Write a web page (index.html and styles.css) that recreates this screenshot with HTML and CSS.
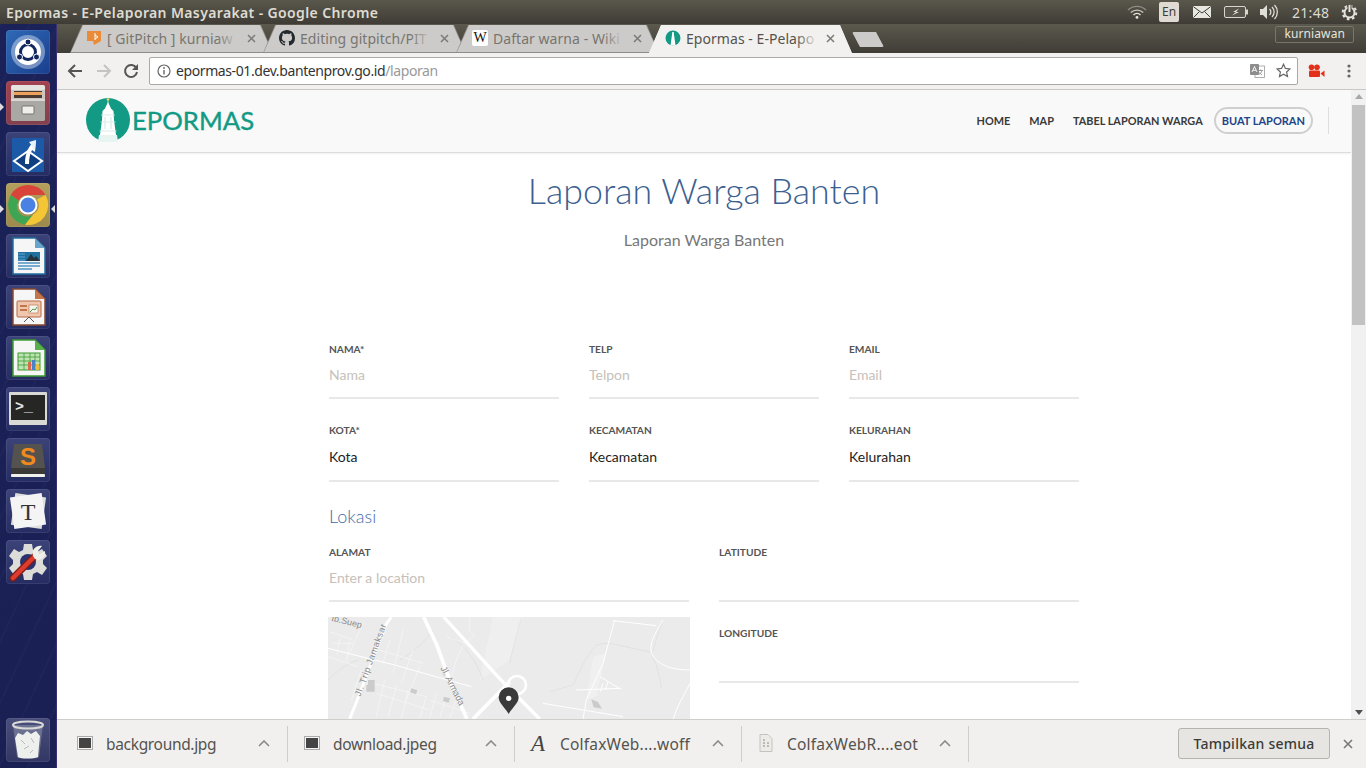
FILE: index.html
```html
<!DOCTYPE html>
<html lang="id">
<head>
<meta charset="utf-8">
<title>Epormas - E-Pelaporan Masyarakat</title>
<link rel="stylesheet" href="styles.css">
</head>
<body>
<div class="desktop">
  <header class="topbar">
    <div class="win-title">Epormas - E-Pelaporan Masyarakat - Google Chrome</div>
    <div class="indicators">
      <svg class="ind-wifi" width="20" height="14" viewBox="0 0 20 14"><path d="M1 5a13 13 0 0 1 18 0" fill="none" stroke="#8f8d86" stroke-width="1.4"/><path d="M3.8 7.6a9 9 0 0 1 12.4 0" fill="none" stroke="#c9c7c0" stroke-width="1.4"/><path d="M6.5 10a5 5 0 0 1 7 0" fill="none" stroke="#e6e4de" stroke-width="1.4"/><circle cx="10" cy="12.4" r="1.4" fill="#e6e4de"/></svg>
      <div class="ind-lang">En</div>
      <svg class="ind-mail" width="18" height="12" viewBox="0 0 18 12"><rect width="18" height="12" rx="1" fill="#e8e6e0"/><path d="M0.5 .8L9 7l8.500-6.200M0.500 11.500L6.500 5.500M17.500 11.500L11.500 5.500" fill="none" stroke="#3f3d36" stroke-width="1"/></svg>
      <svg class="ind-batt" width="24" height="12" viewBox="0 0 24 12"><rect x=".5" y=".5" width="21" height="11" rx="1.500" fill="#57554c" stroke="#d8d6d0"/><rect x="22" y="3.500" width="2" height="5" fill="#d8d6d0"/><path d="M15 2.500L9 6h3l-4 3.500L15 6h-3z" fill="#eceae4"/></svg>
      <svg class="ind-vol" width="20" height="16" viewBox="0 0 20 16"><path d="M1 5h3l4-4v14l-4-4H1z" fill="#e0ded8"/><path d="M10.500 5a4 4 0 0 1 0 6M13 3a7 7 0 0 1 0 10M15.500 1a10 10 0 0 1 0 14" fill="none" stroke="#e0ded8" stroke-width="1.300"/></svg>
      <div class="ind-clock">21:48</div>
      <svg class="ind-power" width="17" height="17" viewBox="0 0 17 17"><circle cx="8.500" cy="8.500" r="6.800" fill="none" stroke="#e6e4de" stroke-width="2" stroke-dasharray="2.700 2.640"/><circle cx="8.500" cy="8.500" r="5" fill="none" stroke="#e6e4de" stroke-width="2"/><path d="M8.500 1v7" stroke="#45433c" stroke-width="4"/><path d="M8.500 1v7" stroke="#e6e4de" stroke-width="2"/></svg>
    </div>
  </header>

  <div class="workspace">
    <nav class="launcher">
      <div class="tile tile-blue">
        <svg viewBox="0 0 44 44"><circle cx="22" cy="22" r="17" fill="#dfe9f6" opacity=".45"/><circle cx="22" cy="22" r="13" fill="#fff"/><circle cx="22" cy="22" r="7.500" fill="none" stroke="#14265f" stroke-width="3"/><circle cx="22" cy="12" r="3" fill="#14265f" stroke="#fff"/><circle cx="13.500" cy="27" r="3" fill="#14265f" stroke="#fff"/><circle cx="30.500" cy="27" r="3" fill="#14265f" stroke="#fff"/></svg>
      </div>
      <div class="tile tile-red">
        <svg viewBox="0 0 44 44"><rect x="5" y="4" width="34" height="36" rx="3" fill="#c9c7c2"/><rect x="5" y="4" width="34" height="5" rx="2" fill="#e6e4df"/><rect x="8" y="10" width="28" height="7" fill="#4a3a30"/><rect x="8" y="11" width="28" height="3" fill="#eda35c"/><rect x="5" y="18" width="34" height="22" rx="2" fill="#a9a8a4"/><rect x="5" y="18" width="34" height="2" fill="#d9d7d2"/><rect x="16" y="25" width="12" height="8" rx="1" fill="#eeeeea" stroke="#77756f"/></svg>
      </div>
      <div class="tile tile-navy">
        <svg viewBox="0 0 44 44"><rect x="6" y="6" width="32" height="34" fill="#1c5aa8"/><path d="M22 19L8 29l14 10 14-10z" fill="#0f3f80" stroke="#fff" stroke-width="2"/><path d="M19 32C19 20 23 13 30 8l-1 12-3-2c-2 4-3 8-3 14z" fill="#fff"/><path d="M30 8l-7 2 6 8z" fill="#e9f1f8"/></svg>
      </div>
      <div class="tile tile-gold">
        <svg viewBox="0 0 44 44"><path d="M4.800 12A20 20 0 0 1 39.500 12H22a10 10 0 0 0-9.200 5.700z" fill="#d9443a"/><path d="M4.800 12A20 20 0 0 0 19 41.800L27.600 31A10 10 0 0 1 12.800 17.700z" fill="#3ea553"/><path d="M39.500 12A20 20 0 0 1 19 41.800L27.600 31A10 10 0 0 0 31 16.500z" fill="#f4c534"/><circle cx="22" cy="22" r="9.500" fill="#fff"/><circle cx="22" cy="22" r="7.500" fill="#4a82e4"/></svg>
      </div>
      <div class="tile tile-navy">
        <svg viewBox="0 0 44 44"><path d="M7 4h22l10 10v26H7z" fill="#f6f6f6" stroke="#1f6f9f" stroke-width="1.500"/><path d="M29 4l10 10H29z" fill="#6aa5c9"/><rect x="12" y="18" width="22" height="9" fill="#1f6f9f"/><path d="M20 27l5-7 3 4 2-2 4 5z" fill="#26323c"/><path d="M12 20h7M12 23h7M12 26h7M12 29h22M12 32h22M12 35h14" stroke="#4d93c4" stroke-width="1.500"/></svg>
      </div>
      <div class="tile tile-navy">
        <svg viewBox="0 0 44 44"><path d="M7 4h22l10 10v26H7z" fill="#f6f6f6" stroke="#8a4a2c" stroke-width="1.500"/><path d="M29 4l10 10H29z" fill="#c4764a"/><rect x="11" y="16" width="24" height="16" rx="1" fill="#efc6ae" stroke="#b66a42"/><rect x="14" y="20" width="7" height="2" fill="#c4764a"/><rect x="14" y="24" width="7" height="2" fill="#c4764a"/><rect x="23" y="20" width="9" height="8" fill="#f5f5f0" stroke="#b66a42" stroke-width=".6"/><path d="M24 27l3-3 2 1 2-3" fill="none" stroke="#4a9a4c"/><path d="M23 32l-5 5M23 32l5 5" stroke="#555"/></svg>
      </div>
      <div class="tile tile-navy">
        <svg viewBox="0 0 44 44"><path d="M7 4h22l10 10v26H7z" fill="#f6f6f6" stroke="#3c9c30" stroke-width="1.500"/><path d="M29 4l10 10H29z" fill="#58b04a"/><rect x="12" y="17" width="22" height="17" fill="#bfe3b4" stroke="#3c9c30"/><path d="M12 21h22M12 25h22M12 29h22M18 17v17M24 17v17M29 17v17" stroke="#3c9c30" stroke-width=".8"/><rect x="22" y="26" width="3" height="8" fill="#d86a4a"/><rect x="26" y="24" width="3" height="10" fill="#4a82c8"/><rect x="30" y="28" width="3" height="6" fill="#e8c040"/></svg>
      </div>
      <div class="tile tile-navy">
        <svg viewBox="0 0 44 44"><rect x="3" y="5" width="38" height="33" rx="1" fill="#d9d9d6"/><rect x="5" y="8" width="34" height="25" fill="#262624"/><text class="term-text" x="9" y="24">&gt;_</text></svg>
      </div>
      <div class="tile tile-navy">
        <svg viewBox="0 0 44 44"><path d="M8 6h28l3 24H5z" fill="#54524f"/><rect x="5" y="30" width="34" height="8" fill="#3a3937"/><rect x="5" y="36" width="34" height="3" rx="1" fill="#f1f0ec"/><text class="sublime-text" x="22" y="27">S</text></svg>
      </div>
      <div class="tile tile-navy">
        <svg viewBox="0 0 44 44"><rect x="7" y="6" width="31" height="32" fill="#dedede" transform="rotate(8 22 22)"/><rect x="6" y="6" width="32" height="32" fill="#f4f4f4" transform="rotate(-8 22 22)"/><text class="typora-text" x="22" y="31">T</text></svg>
      </div>
      <div class="tile tile-navy">
        <svg viewBox="0 0 44 44"><path d="M18 4h8l1 6 4 2 5-3 5 7-4 4v4l4 4-5 7-5-3-4 2-1 6h-8l-1-6-4-2-5 3-5-7 4-4v-4l-4-4 5-7 5 3 4-2z" fill="#dcdcd8"/><circle cx="22" cy="22" r="8" fill="#2a3270"/><path d="M7 38L30 15" stroke="#7e1c16" stroke-width="7" stroke-linecap="round"/><path d="M7 38L30 15" stroke="#dd3c2e" stroke-width="4.500" stroke-linecap="round"/><path d="M27 16c-2-6 3-11 9-10l-4 5 2 3 5-3c1 6-5 11-10 8z" fill="#efefea"/></svg>
      </div>
      <div class="tile tile-navy tile-trash">
        <svg viewBox="0 0 44 44"><path d="M7 7l4 32c0 2 22 2 22 0l4-32z" fill="#8f93a8" opacity=".55"/><path d="M9 20l3-5 5 2 4-4 4 3 5-3 4 5-1 10-1 11c-5 2-17 2-20 0z" fill="#eef0ee"/><path d="M15 22l4 4M25 20l3 5M18 31l5-3M27 32l-3 3" stroke="#b8bab8"/><ellipse cx="22" cy="7" rx="15" ry="3.500" fill="none" stroke="#d8d8d6" stroke-width="2"/></svg>
      </div>
      <span class="pip pip-files"></span>
      <span class="pip pip-chrome-l"></span>
      <span class="pip pip-chrome-r"></span>
    </nav>

    <main class="chrome">
      <div class="tabstrip">
        <div class="tabs">
          <div class="tab">
            <svg class="fav" viewBox="0 0 16 16"><path d="M1 1h14v10l-7 4-1-4H1z" fill="#e98b39"/><path d="M9 3v7M9 5l3 2-3 2" fill="none" stroke="#fff" stroke-width="1"/></svg>
            <span class="tab-title">[ GitPitch ] kurniaw</span>
            <svg class="tab-x" viewBox="0 0 9 9"><path d="M1 1l7 7M8 1L1 8"/></svg>
          </div>
          <div class="tab">
            <svg class="fav" viewBox="0 0 16 16"><path fill="#24292e" d="M8 0C3.580 0 0 3.580 0 8c0 3.540 2.290 6.530 5.470 7.590.4.070.55-.17.55-.38 0-.19-.01-.82-.01-1.490-2.010.37-2.530-.49-2.690-.94-.09-.23-.48-.94-.82-1.130-.28-.15-.68-.52-.01-.53.63-.01 1.080.58 1.230.82.720 1.210 1.870.87 2.330.66.070-.52.28-.87.51-1.070-1.780-.2-3.640-.89-3.640-3.950 0-.87.31-1.590.82-2.150-.08-.2-.36-1.020.08-2.120 0 0 .67-.21 2.200.82.640-.18 1.320-.27 2-.27.680 0 1.360.09 2 .27 1.530-1.040 2.200-.82 2.200-.82.440 1.100.16 1.920.08 2.120.51.56.82 1.270.82 2.150 0 3.070-1.870 3.750-3.650 3.950.29.25.54.73.54 1.480 0 1.070-.01 1.930-.01 2.200 0 .21.15.46.55.38A8.013 8.013 0 0016 8c0-4.420-3.580-8-8-8z"/></svg>
            <span class="tab-title">Editing gitpitch/PIT</span>
            <svg class="tab-x" viewBox="0 0 9 9"><path d="M1 1l7 7M8 1L1 8"/></svg>
          </div>
          <div class="tab">
            <span class="fav fav-wiki">W</span>
            <span class="tab-title">Daftar warna - Wiki</span>
            <svg class="tab-x" viewBox="0 0 9 9"><path d="M1 1l7 7M8 1L1 8"/></svg>
          </div>
          <div class="tab tab-active">
            <svg class="fav" viewBox="0 0 16 16"><circle cx="8" cy="8" r="7.500" fill="#129a85"/><path d="M7.300 2h1.400l.5 4 1.300 9.500H5.500L6.800 6z" fill="#fff"/></svg>
            <span class="tab-title">Epormas - E-Pelapo</span>
            <svg class="tab-x" viewBox="0 0 9 9"><path d="M1 1l7 7M8 1L1 8"/></svg>
          </div>
          <div class="newtab"></div>
        </div>
        <div class="profile">kurniawan</div>
      </div>

      <div class="toolbar">
        <svg class="tb-btn" width="16" height="14" viewBox="0 0 16 14"><path d="M15 7H2M8 1L2 7l6 6" fill="none" stroke="#555" stroke-width="2"/></svg>
        <svg class="tb-btn tb-fwd" width="16" height="14" viewBox="0 0 16 14"><path d="M1 7h13M8 1l6 6-6 6" fill="none" stroke="#c4c4c4" stroke-width="2"/></svg>
        <svg class="tb-btn tb-reload" width="16" height="16" viewBox="0 0 16 16"><path d="M13.300 5A6 6 0 1 0 14 9" fill="none" stroke="#555" stroke-width="2"/><path d="M15 1v6H9z" fill="#555"/></svg>
        <div class="omnibox">
          <svg class="omni-info" width="14" height="14" viewBox="0 0 14 14"><circle cx="7" cy="7" r="6" fill="none" stroke="#666" stroke-width="1.200"/><path d="M7 6v4.500" stroke="#666" stroke-width="1.400"/><circle cx="7" cy="4" r=".9" fill="#666"/></svg>
          <span class="url">epormas-01.dev.bantenprov.go.id<span class="url-path">/laporan</span></span>
          <svg class="omni-translate" width="15" height="14" viewBox="0 0 15 14"><rect x="5" y="2" width="9.500" height="11.500" fill="#fff" stroke="#999" stroke-width=".8"/><rect width="9" height="11" rx="1" fill="#8d8d8d"/><path d="M2 8l2.500-5.500L7 8M3 6.300h3" fill="none" stroke="#fff" stroke-width=".9"/><path d="M8.500 6.500h4.500M10.500 5.500v1M12 6.500c-.5 2-2 3.500-3 4M9.500 8.500c.5 1 1.500 2 2.500 2.500" fill="none" stroke="#888" stroke-width=".8"/></svg>
          <svg class="omni-star" width="15" height="15" viewBox="0 0 15 15"><path d="M7.500 1.200l1.900 4.200 4.600.5-3.400 3.100.9 4.500-4-2.300-4 2.300.9-4.500L1 5.900l4.600-.5z" fill="none" stroke="#666" stroke-width="1.200"/></svg>
        </div>
        <svg class="tb-ext" width="17" height="14" viewBox="0 0 17 14"><circle cx="3.500" cy="3.200" r="2.800" fill="#e2301a"/><circle cx="9" cy="3.200" r="2.800" fill="#e2301a"/><rect x="1" y="6.500" width="11" height="6.500" rx="1" fill="#e2301a"/><path d="M12.500 9.500L16.500 6.500v6.500z" fill="#e2301a"/></svg>
        <svg class="tb-menu" width="4" height="14" viewBox="0 0 4 14"><circle cx="2" cy="2" r="1.600" fill="#666"/><circle cx="2" cy="7" r="1.600" fill="#666"/><circle cx="2" cy="12" r="1.600" fill="#666"/></svg>
      </div>

      <div class="viewport">
        <div class="page">
          <div class="navbar">
            <div class="brand">
              <svg class="brand-mark" width="44" height="45" viewBox="0 0 44 45"><circle cx="22" cy="22" r="22" fill="#129a85"/><path d="M20 44h-7l3-22 .5-9 2.500-2.500L21.500 5 22 1l.5 4 2.500 5.500 2.500 2.500.5 9 3 22z" fill="#fff"/><path d="M15 17h14M14.500 24h15M13.500 33h17" stroke="#cfe8e2" stroke-width=".8"/><path d="M19 19v12M25 19v12" stroke="#d7ece7" stroke-width="1.200"/><path d="M12 44l1-7h18l1 7z" fill="#e7f4f1"/><circle cx="22" cy="1.500" r="1.300" fill="#e8dc60"/></svg>
              <span class="brand-text">EPORMAS</span>
            </div>
            <div class="menu">
              <a class="menu-link">HOME</a>
              <a class="menu-link">MAP</a>
              <a class="menu-link">TABEL LAPORAN WARGA</a>
              <a class="menu-pill">BUAT LAPORAN</a>
              <span class="menu-rule"></span>
            </div>
          </div>

          <h1 class="page-title">Laporan Warga Banten</h1>
          <p class="page-sub">Laporan Warga Banten</p>

          <form class="report">
            <div class="grid-3">
              <div class="field"><div class="lbl">NAMA*</div><div class="ctl ph">Nama</div></div>
              <div class="field"><div class="lbl">TELP</div><div class="ctl ph">Telpon</div></div>
              <div class="field"><div class="lbl">EMAIL</div><div class="ctl ph">Email</div></div>
            </div>
            <div class="grid-3 grid-sel">
              <div class="field"><div class="lbl">KOTA*</div><div class="ctl sel">Kota</div></div>
              <div class="field"><div class="lbl">KECAMATAN</div><div class="ctl sel">Kecamatan</div></div>
              <div class="field"><div class="lbl">KELURAHAN</div><div class="ctl sel">Kelurahan</div></div>
            </div>
            <h2 class="section">Lokasi</h2>
            <div class="grid-2">
              <div class="col">
                <div class="field"><div class="lbl">ALAMAT</div><div class="ctl ph">Enter a location</div></div>
                <div class="map">
                  <svg width="362" height="102" viewBox="25 51 1086 306">
                    <rect x="25" y="51" width="1086" height="306" fill="#ebebeb"/>
                    <path d="M520 51h90l-40 130-90 60z" fill="#efefef"/>
                    <path d="M820 170l40-10-30 130-30 10z" fill="#f0f0f0"/>
                    <g fill="none" stroke="#dcdcdc" stroke-width="2">
                      <path d="M605 55c-15 50-25 90-35 135M690 275l70-20c20-40 40-90 70-120 40-15 90 10 160 20 20 30 30 70 35 110"/>
                      <path d="M1000 155c10-40 20-70 30-95M25 240c30-30 60-50 90-60M240 180c40-20 80-60 100-90M395 110c40 30 70 60 95 130"/>
                    </g>
                    <g fill="none" stroke="#f8f8f8" stroke-width="2">
                      <path d="M30 95l70 25M60 115l-8 50M90 125l-10 60M40 130h60M130 70l-40 90M25 170l90 30M95 300l30-90"/>
                      <path d="M180 150l130 40M210 120l-20 70M250 90l-30 130M280 150l-35 100M300 200l-40 100M160 250l160 40M170 280l160 50M195 240l-25 110M230 260l-25 90M265 270l-20 85M320 290l-20 65M350 280l-20 75M380 290l-20 65M410 300l-20 55M330 300l120 40"/>
                      <path d="M450 51v40l12 15-30 30c-20 30-30 70-40 110M380 110l60 20"/>
                    </g>
                    <path d="M25 145l200 50 230 65" fill="none" stroke="#fff" stroke-width="3"/>
                    <path d="M90 357l30-75 45-120 35-90 15-21" fill="none" stroke="#fff" stroke-width="9"/>
                    <path d="M312 51l40 85 40 110 50 111" fill="none" stroke="#fff" stroke-width="11"/>
                    <path d="M372 51l168 185 120 121" fill="none" stroke="#fff" stroke-width="10"/>
                    <path d="M460 357l110-112" fill="none" stroke="#fff" stroke-width="11"/>
                    <circle cx="592" cy="255" r="27" fill="none" stroke="#fff" stroke-width="8"/>
                    <g fill="none" stroke="#fff" stroke-width="3">
                      <path d="M885 60l-35 130-50 110-10 57M880 62l130 15M1030 60c-30 50-40 70-35 100 20 40 70 50 115 50M1111 250c-20 40-40 70-50 107"/>
                      <path d="M670 310l240 40M770 270l135 -5M840 230l60 35M850 250l-8 25M865 245l-8 25"/>
                    </g>
                    <g fill="#cbcbcb"><path d="M145 240h20v35h-25v-20h5z"/><path d="M275 265l18 6-4 12-18-6z"/><path d="M373 290l18 5-4 13-17-5z"/><path d="M815 298l20 8 12 20-25-4z"/></g>
                    <text class="map-road" transform="translate(34 62) rotate(14)">Ib.Suep</text>
                    <text class="map-road map-road-wide" transform="translate(122 290) rotate(-70)">Jl. Trip Jamaksar</text>
                    <text class="map-road" transform="translate(362 205) rotate(63)">Jl. Armada</text>
                    <path d="M567 342c-8-16-30-32-30-50a30 30 0 0 1 60 0c0 18-22 34-30 50z" fill="#3a3a3a"/>
                    <circle cx="567" cy="295" r="8" fill="#fff"/>
                  </svg>
                </div>
              </div>
              <div class="col col-right">
                <div class="field"><div class="lbl">LATITUDE</div><div class="ctl"></div></div>
                <div class="field"><div class="lbl">LONGITUDE</div><div class="ctl"></div></div>
              </div>
            </div>
          </form>
        </div>
        <div class="scrollbar">
          <span class="sb-up"></span>
          <span class="sb-thumb"></span>
          <span class="sb-down"></span>
        </div>
      </div>

      <footer class="downloads">
        <div class="dl">
          <svg class="dl-icon" width="16" height="14" viewBox="0 0 16 14"><rect x=".5" y=".5" width="15" height="13" fill="#f5f5f5" stroke="#aaa"/><rect x="2" y="2" width="12" height="10" fill="#444"/></svg>
          <span class="dl-name">background.jpg</span>
          <svg class="dl-chev" width="12" height="7" viewBox="0 0 12 7"><path d="M1 6l5-5 5 5" fill="none" stroke="#8a8a88" stroke-width="1.600"/></svg>
        </div>
        <div class="dl">
          <svg class="dl-icon" width="16" height="14" viewBox="0 0 16 14"><rect x=".5" y=".5" width="15" height="13" fill="#f5f5f5" stroke="#aaa"/><rect x="2" y="2" width="12" height="10" fill="#444"/></svg>
          <span class="dl-name">download.jpeg</span>
          <svg class="dl-chev" width="12" height="7" viewBox="0 0 12 7"><path d="M1 6l5-5 5 5" fill="none" stroke="#8a8a88" stroke-width="1.600"/></svg>
        </div>
        <div class="dl">
          <span class="dl-font">A</span>
          <span class="dl-name dl-name-wide">ColfaxWeb....woff</span>
          <svg class="dl-chev" width="12" height="7" viewBox="0 0 12 7"><path d="M1 6l5-5 5 5" fill="none" stroke="#8a8a88" stroke-width="1.600"/></svg>
        </div>
        <div class="dl">
          <svg class="dl-icon" width="16" height="18" viewBox="0 0 16 18"><path d="M2 .5h8l4 4V17.500H2z" fill="#ecebe8" stroke="#c4c3c0"/><path d="M5 6h2M5 9h2M9 9h2M5 12h2M9 12h2" stroke="#8a8a88"/></svg>
          <span class="dl-name dl-name-wide">ColfaxWebR....eot</span>
          <svg class="dl-chev" width="12" height="7" viewBox="0 0 12 7"><path d="M1 6l5-5 5 5" fill="none" stroke="#8a8a88" stroke-width="1.600"/></svg>
        </div>
        <div class="dl-end">
          <button class="dl-all" type="button">Tampilkan semua</button>
          <svg class="dl-close" width="10" height="10" viewBox="0 0 10 10"><path d="M1 1l8 8M9 1l-8 8" stroke="#777" stroke-width="1.600"/></svg>
        </div>
      </footer>
    </main>
  </div>
</div>
</body>
</html>
```
FILE: styles.css
```css
* { box-sizing: border-box; }
html, body { margin: 0; padding: 0; height: 100%; overflow: hidden; }
body { font-family: "Noto Sans", sans-serif; }

.desktop { width: 1366px; height: 768px; display: flex; flex-direction: column; overflow: hidden; background: #1a2158; }

/* Top panel */
.topbar { height: 24px; flex: none; display: flex; align-items: center; justify-content: space-between; padding-left: 6px; background: linear-gradient(#5a574c, #3e3c35); }
.win-title { color: #dfdbd2; font-size: 14px; font-weight: 600; letter-spacing: .37px; white-space: nowrap; }
.indicators { display: flex; align-items: center; height: 24px; }
.ind-wifi { margin-right: 12px; }
.ind-lang { width: 20px; height: 20px; border-radius: 2px; background: #dfdbd2; color: #3f3d36; font-size: 12px; line-height: 20px; text-align: center; margin-right: 14px; }
.ind-mail { margin-right: 13px; }
.ind-batt { margin-right: 11px; }
.ind-vol { margin-right: 13px; }
.ind-clock { color: #dfdbd2; font-size: 14px; letter-spacing: .3px; width: 38px; margin-right: 11px; }
.ind-power { margin-right: 8px; }

.workspace { flex: 1; display: flex; min-height: 0; }

/* Launcher */
.launcher { position: relative; width: 57px; flex: none; display: flex; flex-direction: column; gap: 7px; padding: 6px 7px 6px 6px; border-right: 1px solid #3a2f72; background: repeating-linear-gradient(115deg, rgba(255,255,255,.018) 0 2px, rgba(255,255,255,0) 2px 26px), linear-gradient(#1b2259, #1a2053); }
.tile { width: 44px; height: 44px; flex: none; border-radius: 4px; overflow: hidden; background: linear-gradient(#3b4379, #262d63); box-shadow: inset 0 0 0 1px rgba(255,255,255,.08); }
.tile svg { display: block; width: 44px; height: 44px; }
.tile-blue { background: linear-gradient(135deg, #2f6ab6, #1a3f8e); }
.tile-red { background: linear-gradient(#a4414f, #82404e); }
.tile-gold { background: linear-gradient(#b39f5c, #9c8a4d); }
.tile-trash { margin-top: auto; background: linear-gradient(#4a4e7c, #333764); }
.term-text { font-family: "Liberation Mono", monospace; font-size: 15px; font-weight: 700; fill: #e8e8e8; }
.sublime-text { font-family: "Liberation Sans", sans-serif; font-size: 24px; font-weight: 700; fill: #f08a1c; text-anchor: middle; }
.typora-text { font-family: "Liberation Serif", serif; font-size: 24px; fill: #333; text-anchor: middle; }
.pip { position: absolute; width: 0; height: 0; border-top: 4px solid transparent; border-bottom: 4px solid transparent; }
.pip-files { left: 0; top: 79px; border-left: 4px solid #ddd; }
.pip-chrome-l { left: 0; top: 181px; border-left: 4px solid #ddd; }
.pip-chrome-r { right: 1px; top: 181px; border-right: 4px solid #ddd; }

/* Chrome */
.chrome { flex: 1; min-width: 0; display: flex; flex-direction: column; }
.tabstrip { height: 29px; flex: none; display: flex; justify-content: space-between; padding-left: 13px; background: linear-gradient(#5b584d, #3f3d36); }
.tabs { display: flex; align-items: flex-end; height: 29px; }
.tab { position: relative; width: 203px; height: 28px; flex: none; margin-right: -10px; display: flex; align-items: center; padding: 0 17px 2px 16px; color: #77756f; clip-path: polygon(0 100%, 12px 0, calc(100% - 12px) 0, 100% 100%); background: #8f8d88; }
.tab::before { content: ""; position: absolute; inset: 0 1px 1px; background: #cdcbc9; clip-path: polygon(0 100%, 12px 0, calc(100% - 12px) 0, 100% 100%); }
.tab-active { z-index: 2; background: #f2f1ef; color: #55534e; }
.tab-active::before { inset: 0; background: #f2f1ef; }
.fav { position: relative; width: 16px; height: 16px; flex: none; margin-right: 5px; }
.fav-wiki { background: #fff; border-radius: 2px; color: #111; font-family: "Liberation Serif", serif; font-size: 14px; line-height: 16px; text-align: center; }
.tab-title { position: relative; flex: 1; min-width: 0; overflow: hidden; white-space: nowrap; font-size: 14px; letter-spacing: .05px; }
.tab-title::after { content: ""; position: absolute; top: 0; right: 0; bottom: 0; width: 22px; background: linear-gradient(90deg, rgba(205,203,201,0), #cdcbc9); }
.tab-active .tab-title::after { background: linear-gradient(90deg, rgba(242,241,239,0), #f2f1ef); }
.tab-x { position: relative; width: 9px; height: 9px; flex: none; margin-left: 8px; fill: none; stroke: #7c7a76; stroke-width: 1.500; }
.newtab { width: 32px; height: 15px; margin: 0 0 6px 10px; flex: none; background: #cdcbc9; clip-path: polygon(0 0, 24px 0, 100% 100%, 8px 100%); border-radius: 2px; }
.profile { height: 17px; margin: 2px 12px 0 0; padding: 0 8px; color: #e6e4de; font-size: 12px; line-height: 14px; letter-spacing: .1px; border: 1px solid #77756c; border-radius: 2px; }

.toolbar { height: 37px; flex: none; display: flex; align-items: center; padding: 0 0 1px 10px; background: #f2f1ef; border-bottom: 1px solid #c9c8c5; }
.tb-btn { flex: none; margin-right: 13px; }
.tb-fwd { margin-right: 11px; }
.tb-reload { margin-right: 10px; }
.omnibox { width: 1149px; height: 28px; flex: none; display: flex; align-items: center; padding: 0 6px 0 7px; background: #fff; border: 1px solid #aaa9a6; border-radius: 2px; }
.omni-info { flex: none; margin-right: 5px; }
.url { flex: 1; font-size: 14px; letter-spacing: -.4px; color: #333; white-space: nowrap; }
.url-path { color: #999; }
.omni-translate { flex: none; margin-right: 11px; }
.omni-star { flex: none; }
.tb-ext { flex: none; margin-left: 10px; }
.tb-menu { flex: none; margin-left: 22px; }

.viewport { flex: 1; min-height: 0; display: flex; background: #fff; }
.page { flex: 1; min-width: 0; overflow: hidden; font-family: "Lato", sans-serif; }
.navbar { height: 63px; display: flex; align-items: center; justify-content: space-between; padding: 0 22px 1px 29px; background: #f9f9f9; border-bottom: 1px solid #dcdcdc; box-shadow: 0 1px 2px rgba(0,0,0,.06); }
.brand { display: flex; align-items: center; }
.brand-mark { flex: none; margin-right: 2px; }
.brand-text { color: #129a85; font-size: 25.700px; font-weight: 400; line-height: 1; -webkit-text-stroke: .4px #129a85; }
.menu { display: flex; align-items: center; }
.menu-link { font-size: 10.900px; font-weight: 700; color: #3a3a3a; margin-right: 19px; white-space: nowrap; }
.menu-link:nth-child(3) { margin-right: 11px; }
.menu-pill { height: 27px; padding: 0 6px; display: flex; align-items: center; font-size: 11px; font-weight: 700; color: #1e4488; border: 2px solid #cfcfcf; border-radius: 14px; white-space: nowrap; }
.menu-rule { width: 1px; height: 27px; margin-left: 15px; background: #dedede; }

.page-title { margin: 16px 0 0; text-align: center; font-size: 35.800px; font-weight: 300; line-height: 44px; color: #3c5f91; }
.page-sub { margin: 17px 0 0; text-align: center; font-size: 16px; line-height: 20px; color: #777; }

.report { width: 750px; margin: 93px auto 0; }
.grid-3 { display: grid; grid-template-columns: repeat(3, 230px); column-gap: 30px; }
.grid-sel { margin-top: 25px; }
.grid-sel .ctl { height: 46px; }
.grid-2 { display: grid; grid-template-columns: 360px 360px; column-gap: 30px; }
.col-right { display: flex; flex-direction: column; gap: 25px; }
.lbl { font-size: 10.200px; font-weight: 700; line-height: 12px; color: #555; }
.ctl { height: 44px; border-bottom: 2px solid #e8e8e8; font-size: 14px; line-height: 40px; }
.ph { color: #c6c1ba; }
.sel { color: #222; line-height: 42px; }
.section { margin: 22px 0 18px; font-size: 18px; font-weight: 300; line-height: 24px; color: #3d6ba8; }
.map { width: 362px; height: 102px; margin: 15px 0 0 -1px; }
.map svg { display: block; }
.map-road { font-family: "Liberation Sans", sans-serif; font-size: 27px; fill: #8a8a8a; }
.map-road-wide { letter-spacing: 1.500px; }

.scrollbar { position: relative; width: 15px; flex: none; background: #f1f1f1; }
.sb-thumb { position: absolute; top: 15px; left: 1px; width: 13px; height: 220px; background: #c2c2c2; }
.sb-up { position: absolute; top: 4px; left: 4px; width: 0; height: 0; border-left: 4px solid transparent; border-right: 4px solid transparent; border-bottom: 5px solid #a8a8a8; }
.sb-down { position: absolute; bottom: 4px; left: 4px; width: 0; height: 0; border-left: 4px solid transparent; border-right: 4px solid transparent; border-top: 5px solid #505050; }

/* Download shelf */
.downloads { height: 49px; flex: none; display: flex; align-items: center; background: #f1f0ee; border-top: 1px solid #cfcecb; padding-bottom: 1px; }
.dl { position: relative; width: 227px; height: 36px; flex: none; display: flex; align-items: center; padding: 0 17px 0 16px; border-right: 1px solid #cfcecb; }
.dl:first-child { width: 231px; padding-left: 20px; }
.dl-icon { flex: none; margin: 0 13px 2px 0; }
.dl-font { width: 16px; flex: none; margin-right: 13px; color: #444; font-family: "Liberation Serif", serif; font-style: italic; font-size: 23px; line-height: 1; }
.dl-name { flex: 1; padding-top: 1px; font-size: 15.500px; color: #55534e; white-space: nowrap; letter-spacing: -.33px; }
.dl-name-wide { letter-spacing: .2px; }
.dl-chev { flex: none; }
.dl-end { flex: 1; display: flex; align-items: center; justify-content: flex-end; padding-right: 13px; }
.dl-all { width: 152px; height: 31px; padding: 0; font-family: "Noto Sans", sans-serif; font-size: 14px; font-weight: 500; letter-spacing: .25px; color: #3c3b37; background: #e6e5e2; border: 1px solid #b4b3b0; border-radius: 3px; }
.dl-close { flex: none; margin-left: 13px; }
```
